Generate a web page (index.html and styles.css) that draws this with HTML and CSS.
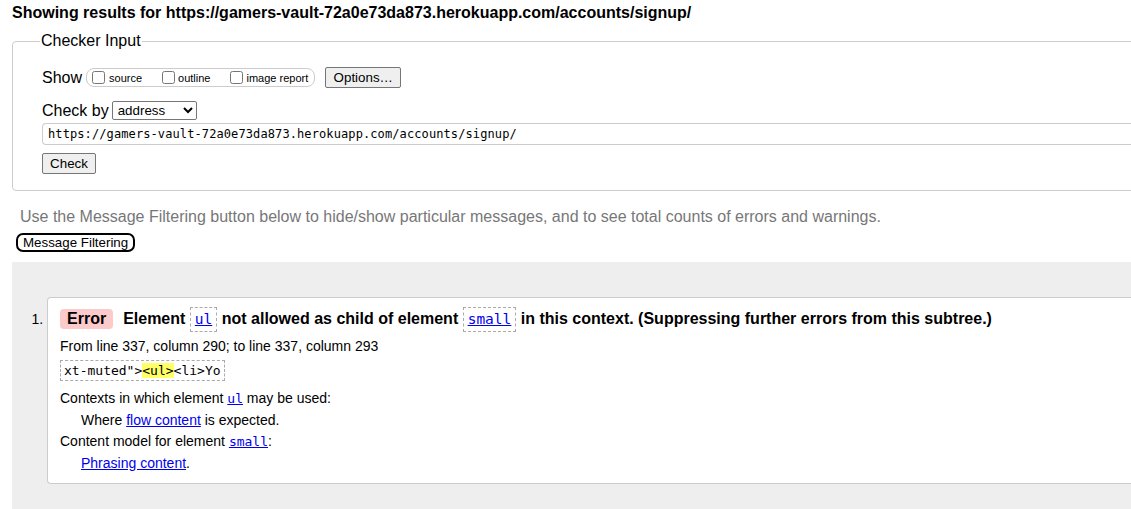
FILE: index.html
```html
<!DOCTYPE html>
<html>
<head>
<meta charset="utf-8">
<link rel="stylesheet" href="styles.css">
</head>
<body>
<div class="page">
  <h2 class="title">Showing results for https://gamers-vault-72a0e73da873.herokuapp.com/accounts/signup/</h2>
  <fieldset class="checker">
    <legend>Checker Input</legend>
    <div class="row show-row">
      <span class="lbl">Show</span>
      <span class="group">
        <label class="opt"><input type="checkbox">source</label>
        <label class="opt"><input type="checkbox">outline</label>
        <label class="opt last"><input type="checkbox">image report</label>
      </span>
      <button class="btn options">Options…</button>
    </div>
    <div class="row by-row">
      <span class="lbl">Check by</span>
      <select class="sel"><option>address</option></select>
    </div>
    <div class="url">https://gamers-vault-72a0e73da873.herokuapp.com/accounts/signup/</div>
    <button class="btn check">Check</button>
  </fieldset>
  <p class="hint">Use the Message Filtering button below to hide/show particular messages, and to see total counts of errors and warnings.</p>
  <button class="filter">Message Filtering</button>
  <div class="results">
    <ol class="msgs">
      <li class="msg">
        <p class="head"><span class="badge">Error</span><span class="htext">Element <code class="tag"><a href="#">ul</a></code> not allowed as child of element <code class="tag"><a href="#">small</a></code> in this context. (Suppressing further errors from this subtree.)</span></p>
        <p class="loc">From line 337, column 290; to line 337, column 293</p>
        <p class="extract"><code>xt-muted"&gt;<b class="hl">&lt;ul&gt;</b>&lt;li&gt;Yo</code></p>
        <p class="info">Contexts in which element <a href="#" class="mono">ul</a> may be used:</p>
        <p class="info ind">Where <a href="#">flow content</a> is expected.</p>
        <p class="info">Content model for element <a href="#" class="mono">small</a>:</p>
        <p class="info ind"><a href="#">Phrasing content</a>.</p>
      </li>
    </ol>
  </div>
</div>
</body>
</html>
```
FILE: styles.css
```css
html, body {
  margin: 0;
  padding: 0;
  overflow: hidden;
  background: #fff;
}
body {
  font-family: "Liberation Sans", Arial, sans-serif;
  color: #000;
}
.page {
  width: 1200px;
  padding: 0 0 0 12px;
}
.title {
  margin: 0;
  padding-top: 3px;
  font-size: 16px;
  font-weight: bold;
  line-height: 19px;
}
.checker {
  margin: 10px 0 0 0;
  padding: 0 0 16px 29px;
  border: 1px solid #ccc;
  border-radius: 4px;
  min-width: 0;
}
.checker legend {
  font-size: 16px;
  padding: 0 1px;
  margin-left: -2px;
  line-height: 18px;
}
.row {
  display: flex;
  align-items: center;
}
.lbl {
  font-size: 16px;
  line-height: 19px;
}
.show-row {
  margin-top: 17px;
  height: 20px;
}
.group {
  display: flex;
  align-items: flex-end;
  height: 17px;
  margin-left: 4px;
  border: 1px solid #ccc;
  border-radius: 8px;
  padding: 0 6px 0 5px;
}
.opt {
  display: flex;
  align-items: center;
  font-size: 11px;
  margin-right: 20px;
  line-height: 13px;
  padding-bottom: 1px;
}
.opt.last { margin-right: 0; }
.opt input {
  margin: 0 3px 0 0;
  width: 13px;
  height: 13px;
  position: relative;
  top: -1px;
}
.opt:first-child input { margin-right: 4px; }
.btn {
  font-family: "Liberation Sans", Arial, sans-serif;
  font-size: 13.33px;
  background: #efefef;
  border: 1px solid #767676;
  border-radius: 2px;
  color: #000;
  padding: 1px 6px;
  height: 21px;
}
.options {
  margin-left: 10px;
  width: 76px;
}
.by-row {
  margin-top: 13px;
  height: 20px;
}
.sel {
  margin-left: 3px;
  width: 85px;
  height: 19px;
  font-family: "Liberation Sans", Arial, sans-serif;
  font-size: 13.33px;
  border: 1px solid #767676;
  border-radius: 2px;
  background: #fff;
  color: #000;
  padding: 0 0 0 1px;
}
.url {
  margin-top: 3px;
  height: 20px;
  border: 1px solid #ccc;
  border-right: none;
  border-radius: 4px 0 0 4px;
  font-family: "DejaVu Sans Mono", "Liberation Mono", monospace;
  font-size: 12px;
  line-height: 20px;
  padding-left: 5px;
  letter-spacing: 0.1px;
}
.check {
  margin-top: 8px;
  width: 54px;
  display: block;
}
.hint {
  margin: 16px 0 0 8px;
  font-size: 16px;
  line-height: 19px;
  color: #777;
}
.filter {
  display: block;
  margin: 7px 0 0 4px;
  font-family: "Liberation Sans", Arial, sans-serif;
  font-size: 13.33px;
  background: #fff;
  border: 2px solid #000;
  border-radius: 7px;
  color: #000;
  padding: 0 5px;
  height: 19px;
  line-height: 15px;
}
.results {
  margin-top: 10px;
  background: #eee;
  padding: 35px 0 26px 35px;
}
.msgs {
  margin: 0;
  padding: 0;
  list-style: decimal;
  font-size: 14px;
}
.msg {
  background: #fff;
  border: 1px solid #ccc;
  border-right: none;
  border-radius: 4px 0 0 4px;
  padding: 9px 0 9px 12px;
}
.msg::marker {
  font-size: 14px;
}
.msg p { margin: 0; }
.head {
  font-size: 16px;
  font-weight: bold;
  line-height: 24px;
  display: flex;
  align-items: center;
  height: 24px;
}
.badge {
  background: #fbcaca;
  border-radius: 4px;
  padding: 0 7px;
  height: 20px;
  line-height: 20px;
  margin-right: 10px;
}
.tag {
  display: inline-block;
  border: 1px dashed #aaa;
  padding: 2px 4px;
  line-height: 19px;
  font-weight: normal;
  font-family: "DejaVu Sans Mono", "Liberation Mono", monospace;
  font-size: 14.5px;
  vertical-align: middle;
  margin: -3px 0;
}
a { color: #00e; }
.loc {
  margin-top: 4px !important;
  line-height: 22px;
}
.extract {
  margin-top: 3px !important;
  display: inline-block;
  border: 1px dashed #aaa;
  padding: 0 3px;
  line-height: 19px;
}
.extract code {
  font-family: "DejaVu Sans Mono", "Liberation Mono", monospace;
  font-size: 13px;
}
.hl {
  background: #ffff66;
  font-weight: normal;
}
.info {
  line-height: 21.5px;
}
.extract + .info { margin-top: 7px !important; }
.ind { padding-left: 21px; }
.mono {
  font-family: "DejaVu Sans Mono", "Liberation Mono", monospace;
  font-size: 13px;
}
```
